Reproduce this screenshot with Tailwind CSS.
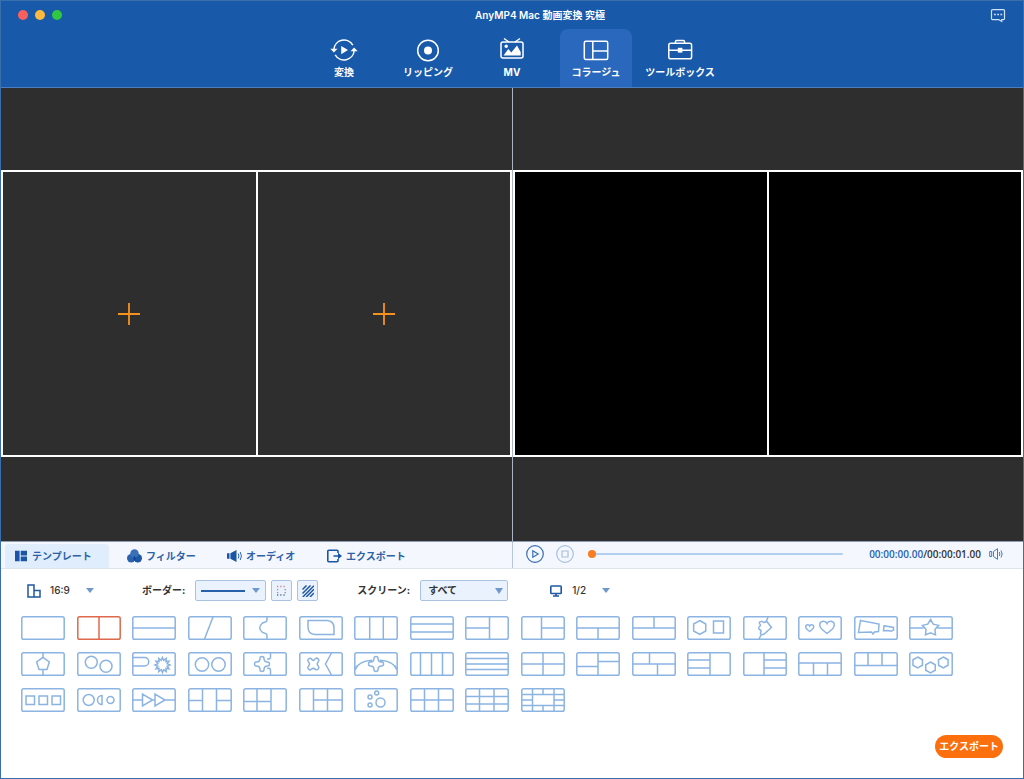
<!DOCTYPE html>
<html lang="ja">
<head>
<meta charset="utf-8">
<meta name="viewport" content="width=device-width, initial-scale=1">
<title>AnyMP4 Mac 動画変換 究極</title>
<script src="https://cdn.jsdelivr.net/npm/@tailwindcss/browser@4"></script>
</head>
<body class="font-['Inter','Noto_Sans_CJK_JP',sans-serif] text-[#333]">
<div class="flex min-h-screen flex-col border border-[#3a6fae] bg-white">

  <header class="relative border-b border-[#4d7fc0] bg-[#1859a9] text-white">
    <div class="absolute top-[9px] left-[17px] flex gap-[7px]">
      <button aria-label="閉じる" class="size-[10px] rounded-full bg-[#fb605c]"></button>
      <button aria-label="最小化" class="size-[10px] rounded-full bg-[#fcbb40]"></button>
      <button aria-label="最大化" class="size-[10px] rounded-full bg-[#2fc840]"></button>
    </div>
    <h1 class="flex h-7 items-center justify-center pl-[56px] text-[10px] font-semibold">AnyMP4 Mac 動画変換 究極</h1>
    <button aria-label="フィードバック" class="absolute top-[7px] right-[17px]">
      <svg class="block h-[15px] w-4" viewBox="0 0 16 15" fill="none" stroke="#cfe4fb" stroke-width="1.2"><path d="M2.5 1.6h11a1 1 0 0 1 1 1v8a1 1 0 0 1-1 1h-1.800v1.900L8.700 11.600H2.500a1 1 0 0 1-1-1v-8a1 1 0 0 1 1-1Z"/><path d="M4 6.500h1.800M7.200 6.500h1.800M10.400 6.500h1.800" stroke-width="1.600"/></svg>
    </button>
    <nav class="flex justify-center gap-3">
      <button class="flex h-[58px] w-[72px] flex-col items-center gap-[2px] pt-2 text-[10px] font-bold whitespace-nowrap">
        <svg class="h-[26px] w-7" viewBox="0 0 28 26" fill="none" stroke="currentColor" stroke-width="1.500"><path d="M3.800 12.500A10.200 10.200 0 0 1 22.800 8.200"/><path d="M24.200 13.500A10.200 10.200 0 0 1 5.200 17.800"/><path d="M.3 11.800h7.200L3.900 15.600ZM20.500 14.200h7.200L24.100 10.400ZM11.200 9v8.200l6.800-4.100Z" fill="currentColor" stroke="none"/></svg>
        変換</button>
      <button class="flex h-[58px] w-[72px] flex-col items-center gap-[2px] pt-2 text-[10px] font-bold whitespace-nowrap">
        <svg class="h-[26px] w-7" viewBox="0 0 28 26" fill="none" stroke="currentColor" stroke-width="1.500"><circle cx="14" cy="13.500" r="10.300"/><circle cx="14" cy="13.500" r="4" fill="currentColor" stroke="none"/></svg>
        リッピング</button>
      <button class="flex h-[58px] w-[72px] flex-col items-center gap-[2px] pt-2 text-[10px] font-bold whitespace-nowrap">
        <svg class="h-[26px] w-7" viewBox="0 0 28 26" fill="none" stroke="currentColor" stroke-width="1.500"><rect x="3" y="5" width="22" height="16" rx="2"/><path d="m6 1.500 5 3.500M22 1.500 17 5"/><circle cx="8.200" cy="9.300" r="1.700" fill="currentColor" stroke="none"/><path d="M5.500 18.500 10.300 12l3 3.500L19 8.500l3.700 6.500v3.500Z" fill="currentColor" stroke="none"/></svg>
        MV</button>
      <button aria-current="page" class="flex h-[58px] w-[72px] flex-col items-center gap-[2px] rounded-t-lg bg-[#2968bd] pt-2 text-[10px] font-bold whitespace-nowrap">
        <svg class="h-[26px] w-7" viewBox="0 0 28 26" fill="none" stroke="currentColor" stroke-width="1.500"><rect x="2.300" y="4.300" width="23.400" height="18.200" rx="1.500"/><path d="M10.800 4.300v18.200M10.800 14h15"/></svg>
        コラージュ</button>
      <button class="flex h-[58px] w-[72px] flex-col items-center gap-[2px] pt-2 text-[10px] font-bold whitespace-nowrap">
        <svg class="h-[26px] w-7" viewBox="0 0 28 26" fill="none" stroke="currentColor" stroke-width="1.500"><rect x="2.800" y="6.300" width="22.800" height="15.400" rx="1.800"/><path d="M9.500 6.300V4.500a1 1 0 0 1 1-1h7a1 1 0 0 1 1 1v1.800M2.800 13.300h22.800"/><path d="M11.800 10.800h4.600v4.800h-4.600Z" fill="currentColor" stroke="none"/></svg>
        ツールボックス</button>
    </nav>
  </header>

  <main class="grid flex-1 grid-cols-2 bg-[#2e2e2e]">
    <section aria-label="編集" class="flex items-center pb-[2px]">
      <div class="grid aspect-video w-full grid-cols-2 gap-[2px] border-2 border-white bg-white">
        <button aria-label="左の動画を追加" class="flex items-center justify-center bg-[#2e2e2e]"><svg class="size-6" viewBox="0 0 24 24" stroke="#f5921e" stroke-width="1.800"><path d="M12 1v22M1 12h22"/></svg></button>
        <button aria-label="右の動画を追加" class="flex items-center justify-center bg-[#2e2e2e]"><svg class="size-6" viewBox="0 0 24 24" stroke="#f5921e" stroke-width="1.800"><path d="M12 1v22M1 12h22"/></svg></button>
      </div>
    </section>
    <section aria-label="プレビュー" class="flex items-center border-l border-[#a9b4c4] pb-[2px]">
      <div class="grid aspect-video w-full grid-cols-2 gap-[2px] border-2 border-white bg-white">
        <div class="bg-black"></div><div class="bg-black"></div>
      </div>
    </section>
  </main>

  <div class="grid grid-cols-2 border-t border-b border-t-[#8f9db5] border-b-[#dde4ee] bg-[#f4f7fd]">
    <div class="flex items-end gap-2 pt-[2px] pl-1 text-[10px] leading-[24px] font-bold whitespace-nowrap text-[#2d62a8]">
      <button class="flex w-[104px] items-center gap-[5px] rounded-t bg-[#e0edfd] pl-[10px]">
        <svg class="h-3 w-3" viewBox="0 0 12 12" fill="#1a55a5"><path d="M0 .7h4.600v10.600H0ZM5.700.7H12v4.700H5.700ZM5.700 6.600H12v4.700H5.700Z"/></svg>テンプレート</button>
      <button class="flex w-[92px] items-center gap-1 pl-[10px]">
        <svg class="h-[14px] w-[15px]" viewBox="0 0 15 14"><circle cx="4.200" cy="9.300" r="4.200" fill="#2b62ad"/><circle cx="10.800" cy="9.300" r="4.200" fill="#1d56a5"/><circle cx="7.500" cy="4.500" r="4.200" fill="#3b70b9"/><path d="M7.500 6.700a4.200 4.200 0 0 1 0 5.200 4.200 4.200 0 0 1 0-5.200Z" fill="#0e418c"/></svg>フィルター</button>
      <button class="flex w-[92px] items-center gap-[3px] pl-[10px]">
        <svg class="h-3 w-4" viewBox="0 0 16 12" fill="none" stroke="#2d66b0"><path d="M0 3.300h2.500v5.400H0ZM3.400 3.300 9.500 0v12L3.400 8.700Z" fill="#1a55a5" stroke="none"/><path d="M11.200 3.500q1.500 2.500 0 5M13.200 2q2.500 4 0 8"/></svg>オーディオ</button>
      <button class="flex items-center gap-1 px-[10px]">
        <svg class="h-[14px] w-[15px]" viewBox="0 0 15 14" fill="none" stroke="#1a55a5" stroke-width="1.600"><path d="M11 4V2.200a1 1 0 0 0-1-1H1.800a1 1 0 0 0-1 1v9.600a1 1 0 0 0 1 1H10a1 1 0 0 0 1-1V10M6.500 7H12"/><path d="M11 3.800 15 7l-4 3.200Z" fill="#1a55a5" stroke="none"/></svg>エクスポート</button>
    </div>
    <div class="flex items-center border-l border-[#b8c7dc] pr-[19px] pb-[2px] pl-[13px]">
      <button aria-label="再生" class="mr-3"><svg class="block size-[18px]" viewBox="0 0 18 18" fill="none" stroke="#3a6eb0" stroke-width="1.200"><circle cx="9" cy="9" r="8.300"/><path d="M6.800 5.700v6.600L12.200 9Z"/></svg></button>
      <button aria-label="停止" class="mr-[14px]"><svg class="block size-[18px]" viewBox="0 0 18 18" fill="none" stroke="#a9c0de" stroke-width="1.200"><circle cx="9" cy="9" r="8.300"/><path d="M6 6h6v6H6Z"/></svg></button>
      <input type="range" min="0" max="100" value="0" aria-label="再生位置" class="h-[2px] min-w-0 flex-1 appearance-none rounded-full bg-[#b3d0ee] [&::-webkit-slider-thumb]:size-2 [&::-webkit-slider-thumb]:appearance-none [&::-webkit-slider-thumb]:rounded-full [&::-webkit-slider-thumb]:bg-[#fa7d22]">
      <span class="ml-[26px] font-['Open_Sans','Noto_Sans',sans-serif] text-[10px] font-semibold whitespace-nowrap text-[#333]"><span class="text-[#2763af]">00:00:00.00</span>/00:00:01.00</span>
      <button aria-label="音量" class="ml-2"><svg class="block h-3 w-[15px]" viewBox="0 0 15 12" fill="none" stroke="#4a7ab8"><path d="M.7 3.500h2v5h-2ZM4.500 3.500 8.500.7v10.600L4.500 8.500ZM10.300 4q1.200 2 0 4M12 2.500q2.400 3.500 0 7"/></svg></button>
    </div>
  </div>

  <div class="flex items-center pt-[11px] pl-[26px] text-[10px] font-medium whitespace-nowrap">
    <label class="relative mr-12 flex items-center gap-[9px]">
      <svg class="h-[14px] w-[14px]" viewBox="0 0 14 14" fill="none" stroke="#1f57a3" stroke-width="1.500"><path d="M1 1h6v12H1ZM7 6.500h6V13H7Z"/></svg>
      <select aria-label="縦横比" class="w-11 appearance-none bg-transparent"><option>16:9</option><option>4:3</option><option>1:1</option></select>
      <svg class="pointer-events-none absolute right-0 h-[5px] w-2" viewBox="0 0 8 5" fill="#6f98cf"><path d="M0 0h8L4 5Z"/></svg>
    </label>
    <div class="mr-[39px] flex items-center gap-[5px]">
      <span class="mr-[5px] font-bold">ボーダー:</span>
      <button aria-label="線の太さ" class="flex h-[21px] w-[71px] items-center justify-between rounded-xs border border-[#a9c2e2] bg-[#e9f2fd] px-[5px]">
        <span class="h-[2px] w-11 bg-[#2860aa]"></span>
        <svg class="h-[5px] w-2" viewBox="0 0 8 5" fill="#6f98cf"><path d="M0 0h8L4 5Z"/></svg>
      </button>
      <button aria-label="線の色" class="flex size-[21px] items-center justify-center rounded-xs border border-[#a9c2e2] bg-[#e9f2fd]"><svg class="size-[11px]" viewBox="0 0 11 11" stroke-width="1.300" stroke-dasharray="1.300 1.900"><path d="M1 1.500h9" stroke="#d58c8c"/><path d="M1 4.700h1.300M8.500 4.700h1.500M1 7.700h1.300M8.500 7.700h1.500" stroke="#b08aa8" stroke-dasharray="none"/><path d="M1 10h9" stroke="#5f6fa0"/></svg></button>
      <button aria-label="線の模様" class="flex size-[21px] items-center justify-center rounded-xs border border-[#a9c2e2] bg-[#e9f2fd]"><svg class="size-3" viewBox="0 0 12 12" stroke="#1f57a3" stroke-width="1.500"><path d="M.5 4.500 4.500.5M.5 8.500l8-8M.8 12 12 .8M4.200 12 12 4.200M8 12l4-4"/></svg></button>
    </div>
    <label class="relative mr-[42px] flex items-center gap-[10px]">
      <span class="font-bold">スクリーン:</span>
      <select class="h-[21px] w-[88px] appearance-none rounded-xs border border-[#a9c2e2] bg-[#e9f2fd] px-[7px] font-bold"><option>すべて</option><option>1</option><option>2</option></select>
      <svg class="pointer-events-none absolute right-[5px] h-[6px] w-2" viewBox="0 0 8 6" fill="#6f98cf"><path d="M0 0h8L4 6Z"/></svg>
    </label>
    <label class="relative flex items-center gap-[10px]">
      <svg class="h-3 w-3" viewBox="0 0 12 12" fill="none" stroke="#1f57a3" stroke-width="1.600"><rect x=".8" y="1" width="10.400" height="7.500" rx=".8"/><path d="M6 8.500v2.500M3 11h6"/></svg>
      <select aria-label="ページ" class="w-[38px] appearance-none bg-transparent"><option>1/2</option><option>2/2</option></select>
      <svg class="pointer-events-none absolute right-0 h-[5px] w-2" viewBox="0 0 8 5" fill="#6f98cf"><path d="M0 0h8L4 5Z"/></svg>
    </label>
  </div>

  <div id="templates" class="mt-[15px] ml-5 grid h-24 w-full max-w-[932px] grid-cols-[repeat(17,44px)] content-between justify-between"></div>

  <footer class="flex justify-end pt-[23px] pr-5 pb-5">
    <button class="h-[23px] rounded-full bg-[#fb6f0e] px-1 text-[10px] font-bold whitespace-nowrap text-white">エクスポート</button>
  </footer>
</div>

<script>
// Shapes inside each 44 x 24 template frame, as SVG path data.
const circle = (x, y, r) => `M${x - r} ${y}a${r} ${r} 0 1 0 ${2 * r} 0a${r} ${r} 0 1 0 ${-2 * r} 0Z`;
const ring = (x, y, n, radii) => {
  let d = '';
  for (let i = 0; i < n; i++) {
    const a = i * 2 * Math.PI / n, r = radii[i % radii.length];
    d += (i ? 'L' : 'M') + (x + r * Math.sin(a)).toFixed(2) + ' ' + (y - r * Math.cos(a)).toFixed(2);
  }
  return d + 'Z';
};
const cross = (x, y) => `M${x} ${y}m-2-5.500q0-2 2-2t2 2q0 3.500 3.500 3.500q2 0 2 2t-2 2q-3.500 0-3.500 3.500q0 2-2 2t-2-2q0-3.500-3.500-3.500q-2 0-2-2t2-2q3.500 0 3.500-3.500Z`;
const shapes = [
  '', 'M22 1v22', 'M1 12h42', 'M25 1 16.500 23',
  'M24 1v3c0 3-3 1.500-5 3.500c-3 2.500-3 6 0 8.500c2 2 5 .5 5 3.500v3.500',
  'M9 4.500H28Q35 5 35 12V18.500H16Q9 18 9 11Z',
  'M15.700 1v22M29.300 1v22', 'M1 8h42M1 16h42', 'M24.500 1v22M1 12h23.500', 'M20.500 1v22M20.500 12H43',
  'M1 12h42M22 12v11', 'M1 12h42M22 1v11',
  ring(12.700, 11.500, 6, [7]) + 'M26.500 5h10v12h-10Z',
  'M25 1 23.500 5 28.500 11.500 20.500 18.500Q17 19 17.500 16.500Q19 14.500 16.500 13.500Q14.500 12 17 10Q18 9 16.500 7.500Q16 5 19 5.500Q21.500 7.500 23.500 5M18.500 18 16 23',
  'M11.700 15.500C8 13 7.200 11.500 7.800 9.800C8.600 8 11 8.500 11.700 10C12.400 8.500 14.800 8 15.600 9.800C16.200 11.500 15.400 13 11.700 15.500ZM29 17.300C23 13 21 11 21.900 7.500C23.200 4.200 27.800 4.500 29 7.500C30.200 4.500 34.800 4.200 36.100 7.500C37 11 35 13 29 17.300Z',
  'M6.500 4.500 25 8 24.500 15.500 20.500 16 19 18 17.500 16 4.500 16.500ZM30 9.800 39.500 11.500 39.500 14 37 15.300 34 14.500 29.500 14.700Z',
  ring(21.500, 12, 10, [8.500, 4.700]) + 'M1 12h13.500M28.500 12H43',
  ring(22, 12, 5, [6.700]) + 'M22 1v4M22 17.500v5.500',
  circle(14.300, 10.300, 6) + circle(29, 14.300, 6),
  'M1 5.500h11.500a4.200 4.200 0 0 1 0 8.500H1' + ring(30.500, 13, 24, [7.500, 4.800]),
  circle(14, 12.500, 6.700) + circle(30.500, 12.500, 6.700),
  cross(19, 12) + 'M27.500 1v4q0 2.500-3.500 2M27.500 23v-4.500q0-3-3.500-2',
  'M14.500 8.500 16.500 6.500q1.500-1 2.700.5t.3 2.500q-2.500 2.500 0 5q1 1.200-.3 2.500t-2.700.5q-2-2.200-4.500 0q-1.200 1-2.500-.5t-.3-2.500q2.500-2.500 0-5q-1-1.200.3-2.500t2.500-.5q1.500 2 2.500 2ZM32.500 1 26.500 12 32.500 23',
  cross(22, 12) + 'M1 18Q4 9 18 8.300M26 8.300Q40 9 43 18',
  'M10.500 1v22M21.500 1v22M32.500 1v22', 'M1 6.500h42M1 12h42M1 17.500h42', 'M22 1v22M1 12h42',
  'M22 1v22M1 14.500h21M22 9.500h21', 'M1 12h42M17.500 1v11M25.500 12v11',
  'M23 1v22M1 8h22M1 16h22', 'M21 1v22M21 8h22M21 16h22',
  'M1 11h42M15.500 11v12M29.500 11v12', 'M1 13.500h42M14 1v12.500M28 1v12.500',
  ring(8.700, 10.500, 6, [5.500]) + ring(21.500, 15.500, 6, [5.500]) + ring(34.300, 10.500, 6, [5.500]),
  'M5 8h8.500v8.500H5ZM18 8h8.500v8.500H18ZM31 8h8.500v8.500H31Z',
  circle(11.700, 12, 5.500) + circle(33.500, 12, 3.500) + 'M25 7.500v9a4.500 4.500 0 0 1 0-9Z',
  'M1 12h9.500M20.500 12h2.500M33 12h10M10.500 6v12L20.500 12ZM23 6v12L33 12Z',
  'M14.500 1v22M28.500 1v22M1 12.500h13.500M28.500 12.500H43',
  'M14 1v22M28 1v22M1 13.500h27', 'M14.500 1v22M28.500 1v22M14.500 12H43',
  circle(22.700, 5, 2) + circle(16, 9, 2) + circle(16, 17, 2) + circle(26.500, 14.500, 4.500),
  'M14.500 1v22M28.500 1v22M1 12h42',
  'M14.500 1v22M29 1v22M1 8.500h42M1 16h42',
  'M1 6.500h42M1 17.500h42M11.500 1v22M33 1v22M22 1v5.500M22 17.500v5.500M1 12h10.500M33 12h10'
];
document.getElementById('templates').innerHTML = shapes.map((d, i) =>
  `<button aria-label="テンプレート ${i + 1}" aria-pressed="${i === 1}" class="${i === 1 ? 'text-[#e0694c]' : 'text-[#8bb4e3]'}"><svg class="block h-6 w-11" viewBox="0 0 44 24" fill="none" stroke="currentColor" stroke-width="1.500"><rect x=".8" y=".8" width="42.400" height="22.400" rx="1.800"/><path d="${d}"/></svg></button>`
).join('');
</script>
</body>
</html>
